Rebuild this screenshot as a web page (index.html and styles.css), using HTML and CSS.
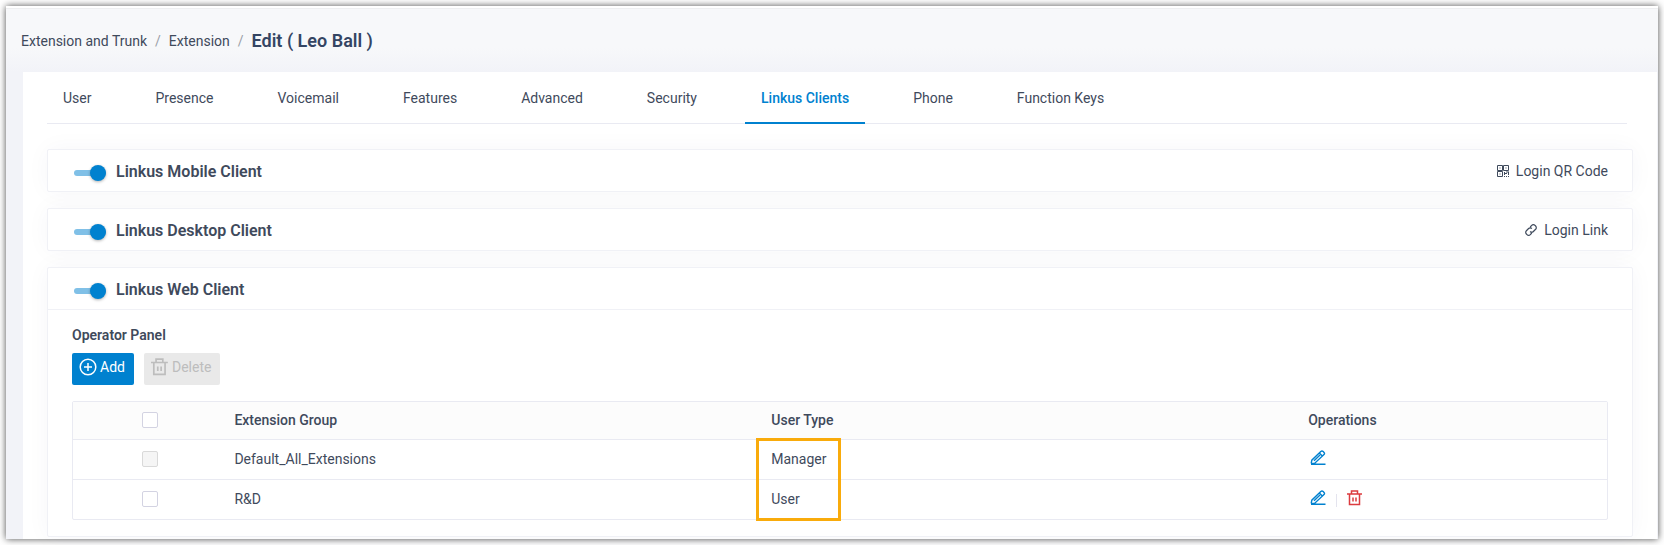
FILE: index.html
```html
<!DOCTYPE html>
<html lang="en">
<head>
  <meta charset="UTF-8" />
  <meta name="viewport" content="width=device-width, initial-scale=1.0" />
  <title>Edit Extension</title>
  <link rel="stylesheet" href="styles.css">
</head>
<body>
  <!-- Shared icons -->
  <svg class="icon-defs" aria-hidden="true">
    <symbol id="icon-trash" viewBox="0 0 16 16">
      <path d="M0 4h15M2.500 4v10.500h10V4M4.500 4V1h6v3M6 7.500v4M9 7.500v4" fill="none" stroke="currentColor" stroke-width="1.500" />
    </symbol>
    <symbol id="icon-edit" viewBox="0 0 16 16">
      <path d="M1 14.200h14.500M1.200 13.500l.6-3.300L10.800 1.500q1.200-1 2.400.1l.8.8q1 1.100 0 2.200L4.800 13.200l-3.600.5M9.300 3l3.300 3.200M4 10.800l6-5.700" fill="none" stroke="currentColor" stroke-width="1.400" />
    </symbol>
  </svg>

  <main class="window">
    <nav class="breadcrumb" aria-label="Breadcrumb">
      <a href="#">Extension and Trunk</a>
      <span class="separator">/</span>
      <a href="#">Extension</a>
      <span class="separator">/</span>
      <h1>Edit ( Leo Ball )</h1>
    </nav>

    <div class="panel">
      <nav class="tabs">
        <a href="#">User</a>
        <a href="#">Presence</a>
        <a href="#">Voicemail</a>
        <a href="#">Features</a>
        <a href="#">Advanced</a>
        <a href="#">Security</a>
        <a href="#" class="active">Linkus Clients</a>
        <a href="#">Phone</a>
        <a href="#">Function Keys</a>
      </nav>

      <section class="card">
        <div class="card-header">
          <input type="checkbox" class="switch" id="mobileClient" checked>
          <label for="mobileClient">Linkus Mobile Client</label>
          <a href="#" class="login-link">
            <svg width="12" height="12" viewBox="0 0 12 12" aria-hidden="true">
              <path d="M.5.5h5v5h-5zM6.500.5h5v5h-5zM.5 6.500h5v5h-5z" fill="none" stroke="currentColor" />
              <path d="M2.500 2.500h1v1h-1zM8.500 2.500h1v1h-1zM2.500 8.500h1v1h-1zM7 7h1v3H7zM8 8h2v1H8zM9 6.500h3V10h-1V7.500H9zM7 11h1v1H7zM9 11h1v1H9zM11 11h1v1h-1z" fill="currentColor" />
            </svg>
            <span>Login QR Code</span>
          </a>
        </div>
      </section>

      <section class="card">
        <div class="card-header">
          <input type="checkbox" class="switch" id="desktopClient" checked>
          <label for="desktopClient">Linkus Desktop Client</label>
          <a href="#" class="login-link">
            <svg width="12" height="12" viewBox="0 0 12 12" aria-hidden="true">
              <path d="M5.200 3l1.500-1.600a2.300 2.300 0 0 1 3.300 0l.6.6a2.300 2.300 0 0 1 0 3.300L8.400 7.500a2.300 2.300 0 0 1-3.300 0M6.800 9l-1.500 1.600a2.300 2.300 0 0 1-3.300 0l-.6-.6a2.300 2.300 0 0 1 0-3.300l2.200-2.200a2.300 2.300 0 0 1 3.300 0" fill="none" stroke="currentColor" stroke-width="1.200" />
            </svg>
            <span>Login Link</span>
          </a>
        </div>
      </section>

      <section class="card">
        <div class="card-header">
          <input type="checkbox" class="switch" id="webClient" checked>
          <label for="webClient">Linkus Web Client</label>
        </div>
        <div class="card-body">
          <h2>Operator Panel</h2>
          <div class="actions">
            <button type="button" class="btn btn-primary">
              <svg width="18" height="18" viewBox="0 0 18 18" aria-hidden="true">
                <path d="M9 1.200a7.800 7.800 0 1 0 0 15.600a7.800 7.800 0 1 0 0-15.600M9 5v8M5 9h8" fill="none" stroke="currentColor" stroke-width="1.500" />
              </svg>
              Add
            </button>
            <button type="button" class="btn" disabled>
              <svg width="18" height="18" aria-hidden="true"><use href="#icon-trash" /></svg>
              Delete
            </button>
          </div>

          <table>
            <thead>
              <tr>
                <th class="col-check"><input type="checkbox" class="checkbox" aria-label="Select all"></th>
                <th class="col-wide">Extension Group</th>
                <th class="col-wide">User Type</th>
                <th>Operations</th>
              </tr>
            </thead>
            <tbody>
              <tr>
                <td class="col-check"><input type="checkbox" class="checkbox" aria-label="Select Default_All_Extensions" disabled></td>
                <td>Default_All_Extensions</td>
                <td class="user-type">Manager<span class="highlight"></span></td>
                <td>
                  <div class="operations">
                    <button type="button" class="icon-btn edit" aria-label="Edit"><svg width="16" height="16"><use href="#icon-edit" /></svg></button>
                  </div>
                </td>
              </tr>
              <tr>
                <td class="col-check"><input type="checkbox" class="checkbox" aria-label="Select R&amp;D"></td>
                <td>R&amp;D</td>
                <td>User</td>
                <td>
                  <div class="operations">
                    <button type="button" class="icon-btn edit" aria-label="Edit"><svg width="16" height="16"><use href="#icon-edit" /></svg></button>
                    <span class="divider"></span>
                    <button type="button" class="icon-btn remove" aria-label="Delete"><svg width="16" height="16"><use href="#icon-trash" /></svg></button>
                  </div>
                </td>
              </tr>
            </tbody>
          </table>
        </div>
      </section>
    </div>
  </main>
</body>
</html>
```

FILE: styles.css
```css
:root {
  --primary: #0081cf;
  --danger: #dc3b3f;
  --text: #3f4a5c;
  --border: #e9eaf2;
  --card-border: #f0f1f6;
}

* {
  box-sizing: border-box;
}

body {
  margin: 0;
  padding: 6px;
  background: #fff;
  color: var(--text);
  font-family: Roboto, "Liberation Sans", sans-serif;
  font-size: 14px;
  line-height: 20px;
}

a {
  color: inherit;
  text-decoration: none;
}

h1,
h2 {
  margin: 0;
  font-weight: 600;
}

.icon-defs {
  display: none;
}

.window {
  border-top: 2px solid #fff;
  background: linear-gradient(#f7f8fa 40px, #f2f3f8 64px);
  box-shadow: 0 0 7px rgba(0, 0, 0, 0.7);
}

.breadcrumb {
  display: flex;
  align-items: center;
  gap: 8px;
  height: 64px;
  padding: 0 15px;
  border-top: 1px solid #eeeff1;
}

.breadcrumb h1 {
  color: #344563;
  font-size: 18px;
}

.separator {
  color: #9b9fa8;
}

.panel {
  margin: 0 1px 0 17px;
  padding: 0 24px 2px;
  background: #fff;
}

.tabs {
  display: flex;
  gap: 32px;
  margin-right: 6px;
  margin-bottom: 25px;
  border-bottom: 1px solid var(--border);
}

.tabs a {
  padding: 16px 16px 14px;
  margin-bottom: -1px;
  border-bottom: 2px solid transparent;
}

.tabs .active {
  border-color: var(--primary);
  color: var(--primary);
  font-weight: 500;
}

.card {
  margin-bottom: 16px;
  border: 1px solid var(--card-border);
  border-radius: 2px;
  background: #fff;
  box-shadow: 0 0 24px rgba(30, 40, 90, 0.04);
}

.card:last-child {
  margin-bottom: 0;
}

.card-header {
  display: flex;
  align-items: center;
  height: 41px;
  padding: 0 24px 0 26px;
}

.card-header label {
  margin-left: 10px;
  padding-top: 2px;
  font-size: 16px;
  font-weight: 600;
}

.switch {
  appearance: none;
  display: flex;
  align-items: center;
  justify-content: flex-end;
  width: 32px;
  height: 6px;
  margin: 4px 0 0;
  border-radius: 3px;
  background: #80c0e7;
}

.switch::before {
  content: "";
  width: 16px;
  height: 16px;
  border-radius: 50%;
  background: var(--primary);
  box-shadow: 0 1px 3px rgba(0, 0, 0, 0.3);
}

.login-link {
  display: flex;
  align-items: center;
  gap: 7px;
  margin-left: auto;
}

.card-body {
  padding: 15px 24px 16px;
  border-top: 1px solid var(--card-border);
}

.card-body h2 {
  font-size: 14px;
}

.actions {
  display: flex;
  gap: 10px;
  margin: 8px 0 16px;
}

.btn {
  display: flex;
  align-items: center;
  gap: 3px;
  height: 32px;
  padding: 0 9px 4px 7px;
  border: 0;
  border-radius: 2px;
  background: #e9e9e9;
  color: #bdbdbd;
  font: inherit;
}

.btn-primary {
  background: var(--primary);
  color: #fff;
}

table {
  width: 100%;
  border: 1px solid var(--border);
  border-radius: 2px;
  border-spacing: 0;
  table-layout: fixed;
}

th,
td {
  height: 40px;
  padding: 0 8px 2px;
  border-top: 1px solid var(--border);
  text-align: left;
}

th {
  height: 37px;
  border-top: 0;
  background: #fcfcfc;
  font-weight: 500;
}

.col-check {
  width: 10%;
  text-align: center;
}

.col-wide {
  width: 35%;
}

.checkbox {
  appearance: none;
  display: block;
  width: 16px;
  height: 16px;
  margin: 0 auto;
  border: 1px solid #d3d3e2;
  border-radius: 2px;
  background: #fff;
}

.checkbox:disabled {
  border-color: #d9d9d9;
  background: #f5f5f5;
}

.user-type {
  position: relative;
}

/* Frame round both user types */
.highlight {
  position: absolute;
  top: -2px;
  left: -7px;
  width: 85px;
  height: 83px;
  border: 3px solid #f9ab0b;
}

.operations {
  display: flex;
  align-items: center;
  padding: 0 0 2px 2px;
}

.icon-btn {
  display: flex;
  padding: 0;
  border: 0;
  background: none;
}

.edit {
  color: var(--primary);
}

.remove {
  color: var(--danger);
}

.divider {
  width: 1px;
  height: 13px;
  margin: 5px 10px 0;
  background: #e4e4ee;
}
```
